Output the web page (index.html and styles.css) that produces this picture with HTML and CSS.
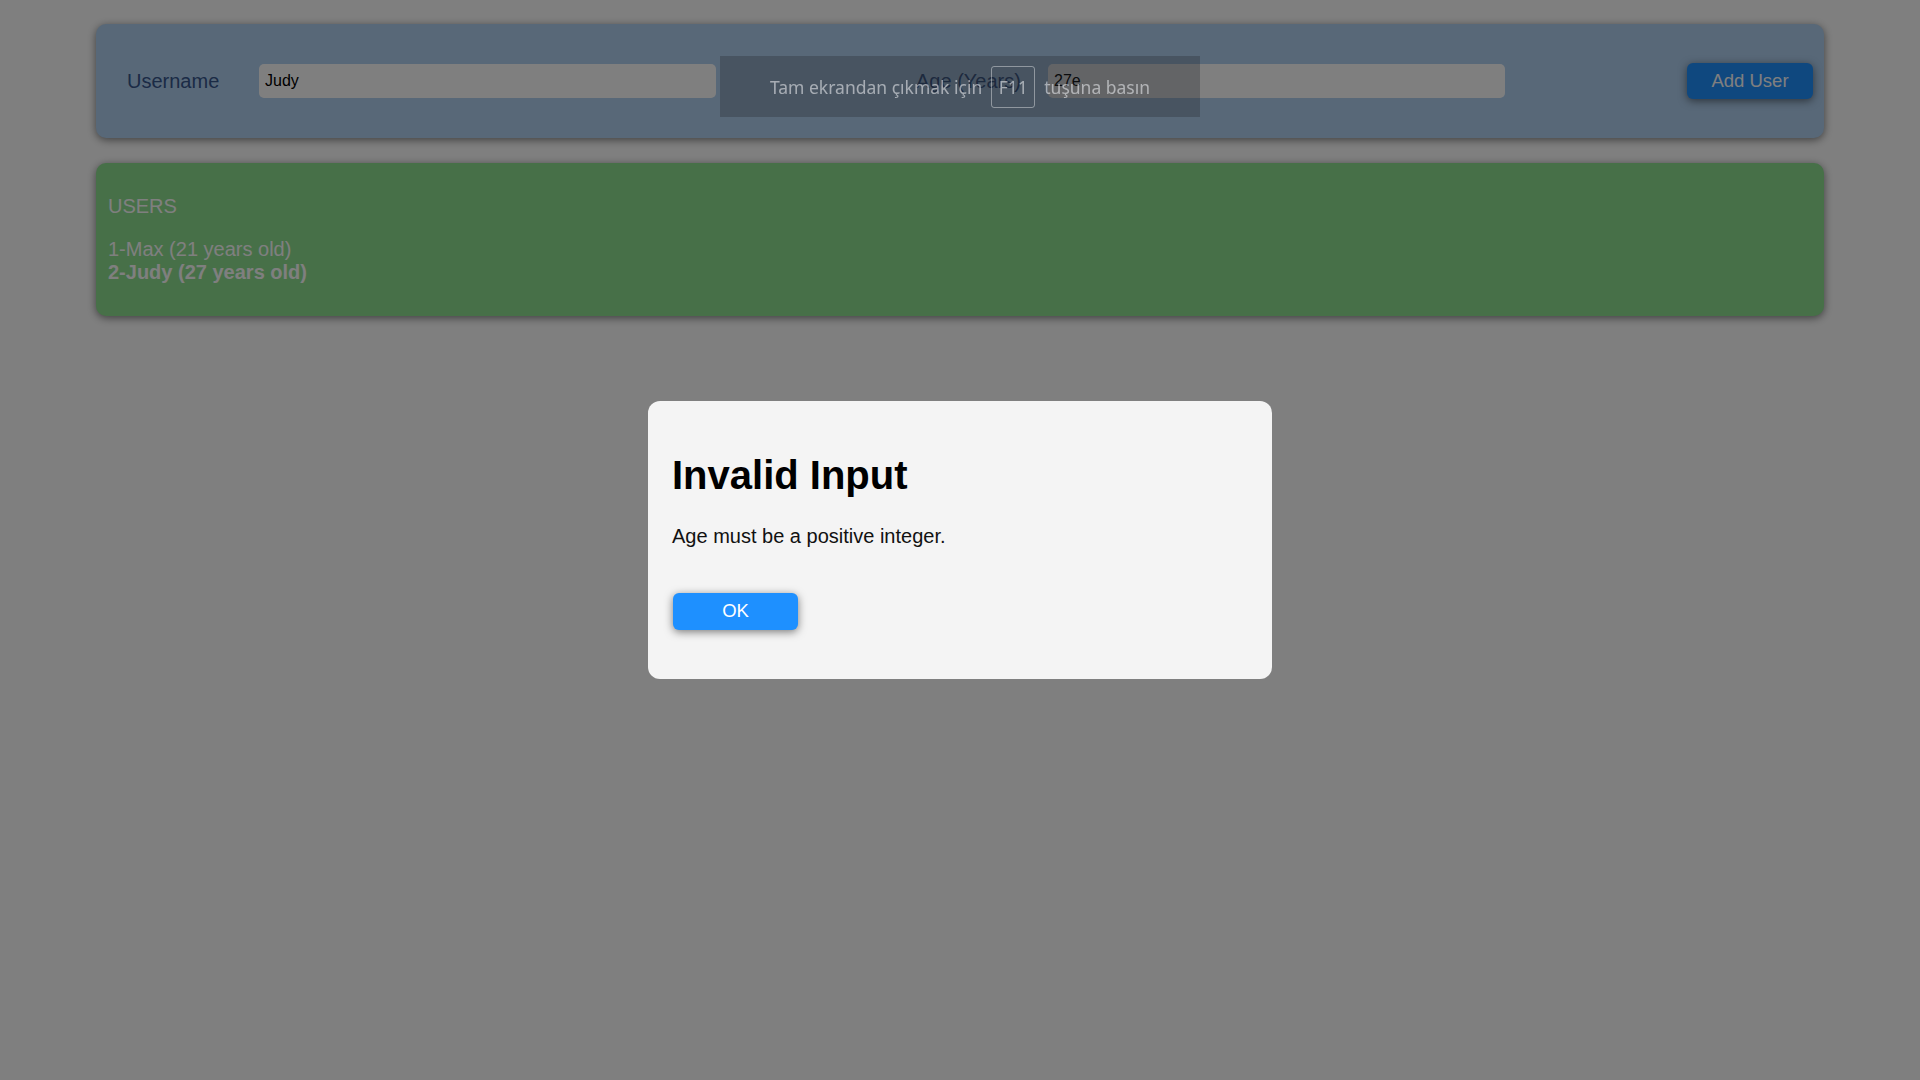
FILE: index.html
```html
<!DOCTYPE html>
<html lang="en">
<head>
<meta charset="utf-8">
<title>Users</title>
<link rel="stylesheet" href="styles.css">
</head>
<body>
  <form class="card form-card">
    <div class="field">
      <label class="field-label" for="username">Username</label>
      <input class="field-input" id="username" type="text" value="Judy">
    </div>
    <div class="field field-age">
      <label class="field-label" for="age">Age (Years)</label>
      <input class="field-input" id="age" type="text" value="27e">
    </div>
    <button class="btn add-btn" type="button">Add User</button>
  </form>

  <section class="card users-card">
    <h2 class="users-title">USERS</h2>
    <ul class="users-list">
      <li>1-Max (21 years old)</li>
      <li class="latest">2-Judy (27 years old)</li>
    </ul>
  </section>

  <div class="backdrop">
    <div class="modal" role="dialog">
      <h2 class="modal-title">Invalid Input</h2>
      <p class="modal-text">Age must be a positive integer.</p>
      <div class="modal-actions">
        <button class="btn ok-btn" type="button">OK</button>
      </div>
    </div>
  </div>

  <div class="fs-notice">
    <span>Tam ekrandan çıkmak için</span>
    <span class="fs-key">F11</span>
    <span>tuşuna basın</span>
  </div>
</body>
</html>
```

FILE: styles.css
```css
* { box-sizing: border-box; }

html, body {
  margin: 0;
  padding: 0;
}

body {
  background: #ffffff;
  font-family: "Liberation Sans", Arial, sans-serif;
  font-size: 20px;
  color: #000;
  height: 1080px;
  overflow: hidden;
}

.card {
  width: 1728px;
  margin: 24px auto 0;
  border-radius: 10px;
  box-shadow: 0 2px 8px rgba(0, 0, 0, 0.5);
}

.form-card {
  background: #b0d0f0;
  display: flex;
  align-items: center;
  height: 114px;
  padding: 0 11px 0 31px;
}

.field {
  display: flex;
  align-items: center;
}

.field-age {
  margin-left: 200px;
}

.field-label {
  width: 132px;
  font-size: 20px;
  color: #37568c;
}

.field-input {
  width: 457px;
  height: 34px;
  border: none;
  border-radius: 5px;
  background: #ffffff;
  padding: 0 6px;
  font-family: "Liberation Sans", Arial, sans-serif;
  font-size: 16px;
  color: #000;
  outline: none;
}

.btn {
  border: none;
  cursor: pointer;
  font-family: "Liberation Sans", Arial, sans-serif;
  color: #ffffff;
  background: #1e90ff;
  box-shadow: 0 2px 8px rgba(0, 0, 0, 0.5);
}

.add-btn {
  margin-left: auto;
  width: 126px;
  height: 36px;
  border-radius: 6px;
  font-size: 18.5px;
  padding: 0;
}

.users-card {
  margin-top: 25px;
  background: #8ee090;
  padding: 12px;
  color: #ffffff;
}

.users-title {
  margin: 20px 0;
  font-size: 20px;
  font-weight: normal;
  line-height: 23px;
}

.users-list {
  list-style: none;
  margin: 20px 0;
  padding: 0;
  line-height: 23px;
}

.users-list .latest {
  font-weight: bold;
}

.backdrop {
  position: fixed;
  inset: 0;
  background: rgba(0, 0, 0, 0.5);
  display: flex;
  align-items: center;
  justify-content: center;
}

.modal {
  width: 624px;
  background: #f4f4f4;
  border-radius: 12px;
  padding: 24px;
}

.modal-title {
  margin: 26.8px 0;
  font-size: 40px;
  font-weight: bold;
  line-height: 46px;
  color: #000;
}

.modal-text {
  margin: 20px 0 0;
  line-height: 23px;
  color: #111;
}

.modal-actions {
  margin: 45px 0 25px;
}

.ok-btn {
  display: block;
  width: 125px;
  height: 37px;
  margin-left: 1px;
  border-radius: 6px;
  font-size: 18.5px;
  padding: 0;
}

.fs-notice {
  position: fixed;
  top: 56px;
  left: 720px;
  width: 480px;
  height: 61px;
  background: rgba(35, 40, 46, 0.3);
  display: flex;
  align-items: center;
  justify-content: center;
  gap: 9px;
  font-family: "Segoe UI", "Noto Sans", sans-serif;
  font-size: 17.5px;
  color: rgba(230, 232, 235, 0.6);
  z-index: 10;
}

.fs-key {
  display: inline-flex;
  align-items: center;
  justify-content: center;
  width: 44px;
  height: 42px;
  border: 1px solid rgba(230, 232, 235, 0.45);
  border-radius: 3px;
}
```
